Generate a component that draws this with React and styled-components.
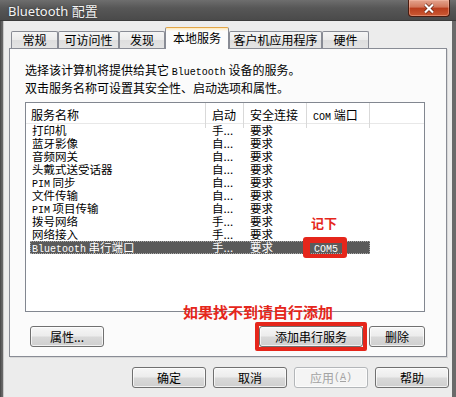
import React from 'react'
import styled, { createGlobalStyle } from 'styled-components'

const services = [
  { name: '打印机', start: '手...', sec: '要求' },
  { name: '蓝牙影像', start: '自...', sec: '要求' },
  { name: '音频网关', start: '自...', sec: '要求' },
  { name: '头戴式送受话器', start: '自...', sec: '要求' },
  { name: <><Mono>PIM</Mono> 同步</>, start: '自...', sec: '要求' },
  { name: '文件传输', start: '自...', sec: '要求' },
  { name: <><Mono>PIM</Mono> 项目传输</>, start: '自...', sec: '要求' },
  { name: '拨号网络', start: '手...', sec: '要求' },
  { name: '网络接入', start: '手...', sec: '要求' },
  { name: <><Mono>Bluetooth</Mono> 串行端口</>, start: '手...', sec: '要求', com: 'COM5', selected: true },
]

const tabs = [
  { label: '常规', w: 47 },
  { label: '可访问性', w: 61 },
  { label: '发现', w: 46 },
  { label: '本地服务', w: 64, active: true },
  { label: '客户机应用程序', w: 93 },
  { label: '硬件', w: 47 },
]

function Mono({ children }) {
  return <MonoText>{children}</MonoText>
}

export default function App() {
  return (
    <Window>
      <GlobalStyle />
      <TitleBar>
        <Title>Bluetooth 配置</Title>
        <CloseBtn>
          <svg width="14" height="11" viewBox="0 0 14 11">
            <path d="M3 1.5 L11 9.5 M11 1.5 L3 9.5" stroke="#5a1a0a" strokeWidth="3.4" />
            <path d="M3 1.5 L11 9.5 M11 1.5 L3 9.5" stroke="#fff" strokeWidth="2.2" />
          </svg>
        </CloseBtn>
      </TitleBar>
      <Client>
        <TabStrip>
          {tabs.map((t) => (
            <Tab key={t.label} $w={t.w} $active={t.active}>
              {t.label}
            </Tab>
          ))}
        </TabStrip>
        <Panel>
          <Desc>
            选择该计算机将提供给其它 <Mono>Bluetooth</Mono> 设备的服务。
          </Desc>
          <Desc>双击服务名称可设置其安全性、启动选项和属性。</Desc>
          <ListBox>
            <Header>
              <HeadCell $pad={5}>服务名称</HeadCell>
              <HeadCell>启动</HeadCell>
              <HeadCell>安全连接</HeadCell>
              <HeadCell>
                <Mono>COM</Mono> 端口
              </HeadCell>
              <HeadCell $last />
            </Header>
            <Rows>
              {services.map((s, i) => (
                <Row key={i} $selected={s.selected}>
                  <Cell $pad={2}>{s.name}</Cell>
                  <Cell>{s.start}</Cell>
                  <Cell>{s.sec}</Cell>
                  <Cell $pad={7}>{s.com && <Mono>{s.com}</Mono>}</Cell>
                </Row>
              ))}
            </Rows>
          </ListBox>
          <ButtonRow>
            <Button $w={74} $ml={5}>
              属性...
            </Button>
            <Spacer />
            <RedFrame>
              <Button $w={104}>添加串行服务</Button>
            </RedFrame>
            <Button $w={56} $ml={2}>
              删除
            </Button>
          </ButtonRow>
          <Note $x={301} $y={165} $size={13}>
            记下
          </Note>
          <ComMark />
          <Note $x={173} $y={254} $size={15}>
            如果找不到请自行添加
          </Note>
        </Panel>
        <Footer>
          <Button $w={74}>确定</Button>
          <Button $w={74}>取消</Button>
          <Button $w={74} $disabled>
            应用 <Mono>(<u>A</u>)</Mono>
          </Button>
          <Button $w={74}>帮助</Button>
        </Footer>
      </Client>
    </Window>
  )
}

const GlobalStyle = createGlobalStyle`
  html, body {
    margin: 0;
    padding: 0;
  }
  body {
    font-family: "Noto Sans CJK SC", "Noto Sans", sans-serif;
    font-size: 12px;
    color: #000;
    background: #4e4e4e;
  }
  * {
    box-sizing: border-box;
  }
`

const MonoText = styled.span`
  font-family: "Liberation Mono", "DejaVu Sans Mono", monospace;
  font-size: 10px;
`

const Window = styled.div`
  width: 456px;
  height: 397px;
  display: flex;
  flex-direction: column;
  background: linear-gradient(90deg, #3e3e3e, #5c5c5c 1px, #6a6a6a 3px);
  overflow: hidden;
`

const TitleBar = styled.div`
  height: 21px;
  flex: none;
  display: flex;
  align-items: flex-start;
  background: linear-gradient(#6e6e6e, #575757 40%, #4a4a4a);
  border-bottom: 1px solid #3a3a3a;
`

const Title = styled.div`
  font-family: "Noto Sans", "Noto Sans CJK SC", sans-serif;
  font-size: 13px;
  line-height: 22px;
  color: #f4f4f4;
  padding-left: 8px;
  text-shadow: 0 0 2px rgba(0, 0, 0, 0.5);
`

const CloseBtn = styled.div`
  margin-left: auto;
  margin-right: 6px;
  width: 42px;
  height: 17px;
  display: flex;
  align-items: center;
  justify-content: center;
  border: 1px solid #4a1c10;
  border-top: none;
  border-radius: 0 0 4px 4px;
  background: linear-gradient(#e4a48e, #d2765a 45%, #b83c1c 50%, #cc5a34);
  box-shadow: inset 0 0 0 1px rgba(255, 200, 180, 0.4);
`

const Client = styled.div`
  flex: 1;
  margin: 0 4px 0 3px;
  padding: 6px 5px 0;
  background: #ececec;
  border-left: 1px solid #c8c8c8;
`

const TabStrip = styled.div`
  height: 21px;
  display: flex;
  align-items: flex-end;
  padding-left: 2px;
`

const Tab = styled.div`
  width: ${(p) => p.$w}px;
  height: ${(p) => (p.$active ? 22 : 17)}px;
  margin-bottom: ${(p) => (p.$active ? -1 : 0)}px;
  position: relative;
  z-index: ${(p) => (p.$active ? 1 : 0)};
  display: flex;
  align-items: center;
  justify-content: center;
  padding-bottom: ${(p) => (p.$active ? 2 : 0)}px;
  font-size: 12px;
  line-height: 1;
  border: 1px solid #898c95;
  border-bottom: none;
  border-top-color: ${(p) => (p.$active ? '#e2a546' : '#898c95')};
  border-radius: 2px 2px 0 0;
  background: ${(p) =>
    p.$active
      ? 'linear-gradient(#fde7b8, #fcfcfc 3px)'
      : 'linear-gradient(#f5f5f5, #ebebeb 50%, #dedede 50%, #e4e4e4)'};
`

const Panel = styled.div`
  position: relative;
  height: 309px;
  padding: 12px 21px 0 15px;
  background: #fbfbfb;
  border: 1px solid #898c95;
  box-shadow: 1px 1px 0 #d8d8d8;
`

const Desc = styled.div`
  height: 18px;
  line-height: 18px;
  font-size: 12px;
  white-space: nowrap;
`

const ListBox = styled.div`
  margin-top: 5px;
  height: 210px;
  background: #fff;
  border: 1px solid #828790;
`

const Header = styled.div`
  display: grid;
  grid-template-columns: 180px 38px 63px 63px 1fr;
  height: 21px;
  border-bottom: 1px solid #e8e8e8;
`

const HeadCell = styled.div`
  padding-left: ${(p) => p.$pad ?? 6}px;
  line-height: 20px;
  padding-top: 2px;
  font-size: 12px;
  border-right: ${(p) => (p.$last ? 'none' : '1px solid #d9d9d9')};
  white-space: nowrap;
`

const Rows = styled.div`
  padding: 0 0 0 4px;
`

const Row = styled.div`
  display: grid;
  grid-template-columns: 176px 38px 63px 63px;
  width: 340px;
  height: 13px;
  line-height: 13px;
  font-size: 11.5px;
  color: ${(p) => (p.$selected ? '#fff' : '#000')};
  background: ${(p) => (p.$selected ? '#5a5a5a' : 'transparent')};
  outline: ${(p) => (p.$selected ? '1px dotted #a8a8a8' : 'none')};
  outline-offset: -1px;
`

const Cell = styled.div`
  padding-left: ${(p) => p.$pad ?? 6}px;
  white-space: nowrap;
`

const ButtonRow = styled.div`
  margin-top: 10px;
  height: 29px;
  display: flex;
  align-items: center;
`

const Spacer = styled.div`
  flex: 1;
`

const RedFrame = styled.div`
  border: 4px solid #e5261b;
  border-radius: 2px;
  display: flex;
`

const Button = styled.div`
  width: ${(p) => p.$w}px;
  height: 21px;
  margin-left: ${(p) => p.$ml ?? 0}px;
  flex: none;
  display: flex;
  align-items: center;
  justify-content: center;
  font-size: 12px;
  color: ${(p) => (p.$disabled ? '#a3a3a3' : '#000')};
  border: 1px solid ${(p) => (p.$disabled ? '#b3b6b9' : '#707070')};
  border-radius: 3px;
  background: ${(p) =>
    p.$disabled
      ? '#f4f4f4'
      : 'linear-gradient(#f6f6f6, #ececec 48%, #d9d9d9 52%, #cfcfcf)'};
  box-shadow: inset 0 0 0 1px rgba(255, 255, 255, 0.7);
  white-space: nowrap;
`

const Note = styled.div`
  position: absolute;
  left: ${(p) => p.$x}px;
  top: ${(p) => p.$y}px;
  font-size: ${(p) => p.$size}px;
  line-height: 18px;
  font-weight: bold;
  color: #e5261b;
  white-space: nowrap;
`

const ComMark = styled.div`
  position: absolute;
  left: 293px;
  top: 188px;
  width: 44px;
  height: 21px;
  border-style: solid;
  border-color: #e5261b;
  border-width: 6px 5px 4px 7px;
  border-radius: 3px;
`

const Footer = styled.div`
  margin-top: 10px;
  margin-right: -2px;
  display: flex;
  justify-content: flex-end;
  gap: 7px;
`
